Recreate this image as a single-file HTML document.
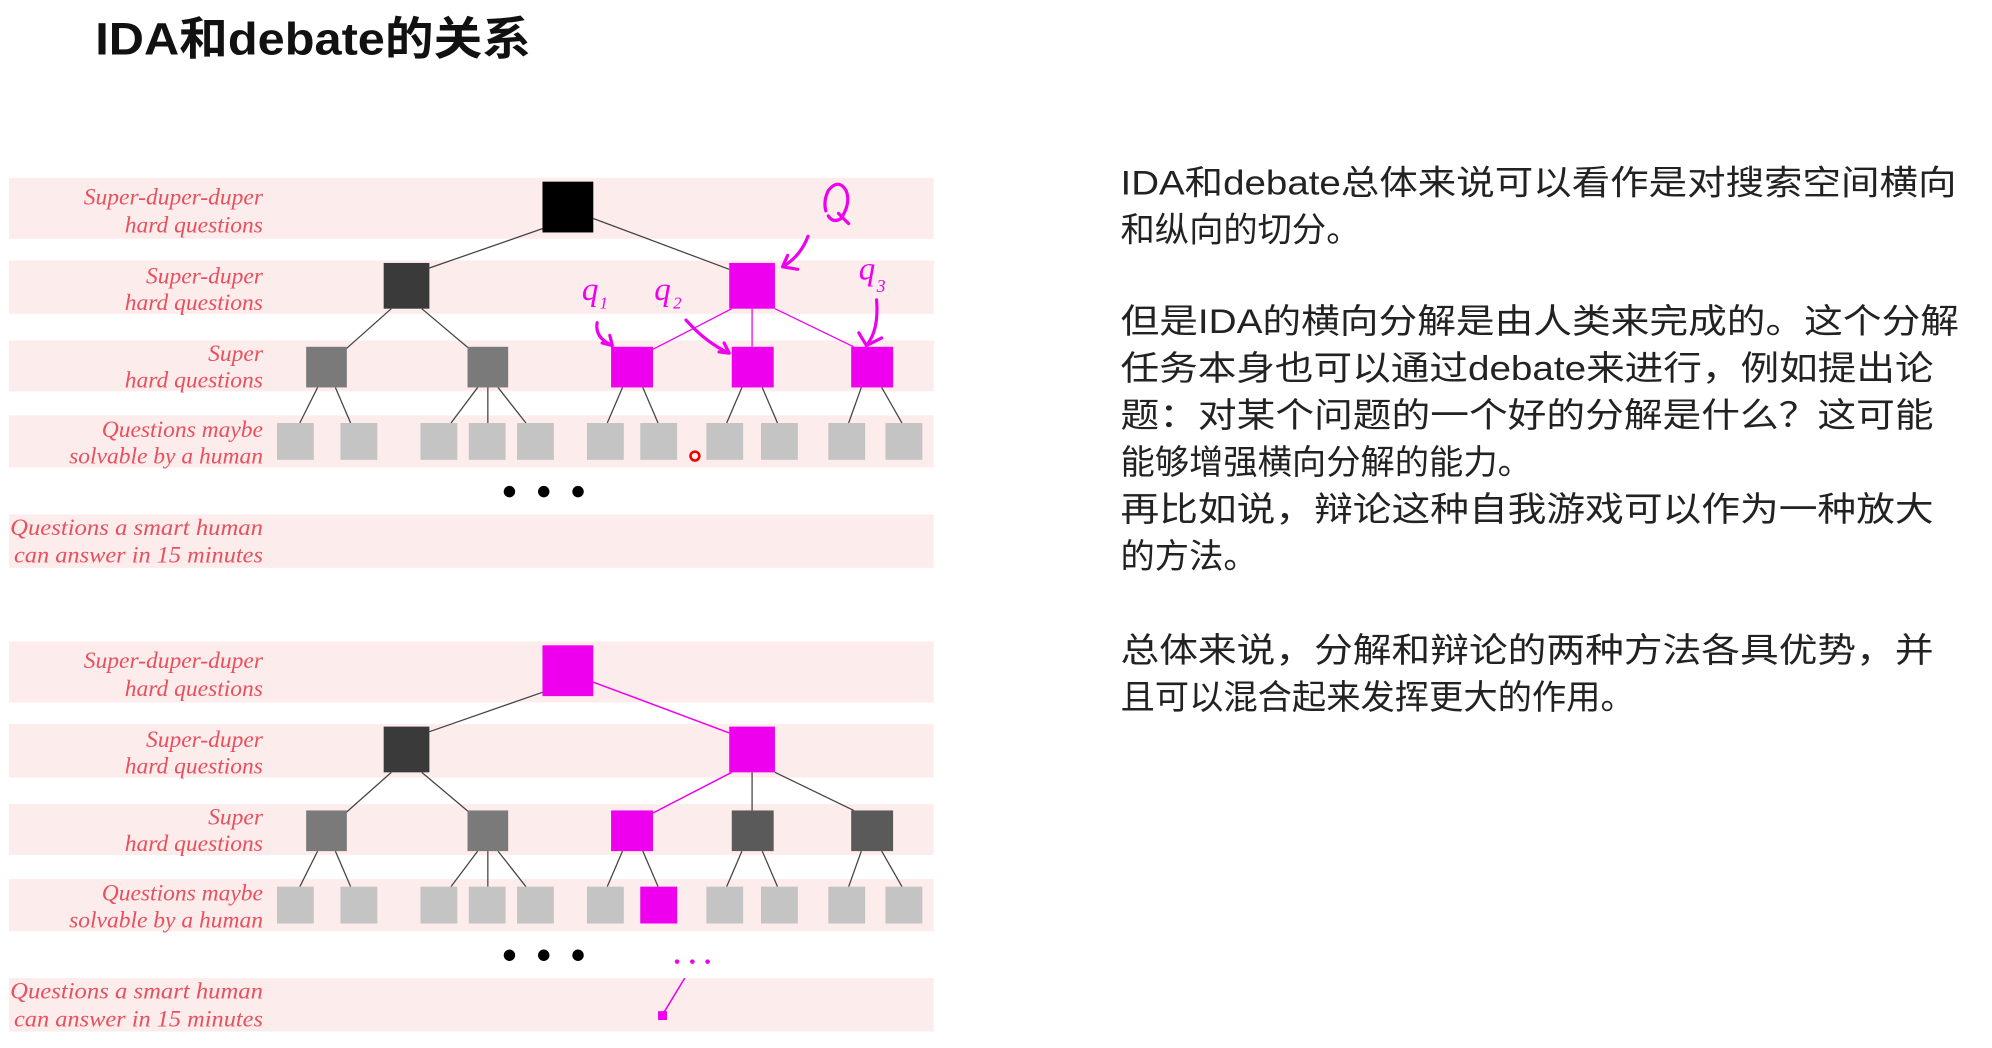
<!DOCTYPE html>
<html><head><meta charset="utf-8"><style>
html,body{margin:0;padding:0;background:#fff;overflow:hidden}
svg{display:block}
.lb{font-family:"Liberation Serif",serif;font-style:italic;font-size:18.5px;fill:#e8505e;text-anchor:end}
.tx{font-family:"Liberation Sans","Noto Sans CJK SC",sans-serif;font-size:27px;fill:#222}
</style></head><body>
<svg width="1992" height="1048" viewBox="0 0 1568 825" preserveAspectRatio="none" xmlns="http://www.w3.org/2000/svg">
<rect width="1568" height="825" fill="#fff"/>
<text x="75" y="43" font-family="Liberation Sans,'Noto Sans CJK SC',sans-serif" font-weight="bold" font-size="36" fill="#111" textLength="343" lengthAdjust="spacingAndGlyphs">IDA和debate的关系</text>

<g id="d1">
<g fill="#fdecec">
<rect x="7" y="140" width="728" height="48"/><rect x="7" y="205" width="728" height="42"/>
<rect x="7" y="268" width="728" height="40"/><rect x="7" y="327" width="728" height="41"/>
<rect x="7" y="405" width="728" height="42"/></g>
<g class="lb">
<text x="207" y="161">Super-duper-duper</text><text x="207" y="183">hard questions</text>
<text x="207" y="223">Super-duper</text><text x="207" y="244">hard questions</text>
<text x="207" y="284">Super</text><text x="207" y="305">hard questions</text>
<text x="207" y="344">Questions maybe</text><text x="207" y="365">solvable by a human</text>
<text x="207" y="421" textLength="199" lengthAdjust="spacingAndGlyphs">Questions a smart human</text><text x="207" y="443" textLength="196" lengthAdjust="spacingAndGlyphs">can answer in 15 minutes</text>
</g>
<g stroke="#444" stroke-width="1">
<line x1="250" y1="305" x2="236" y2="333"/><line x1="264" y1="305" x2="276" y2="333"/>
<line x1="376" y1="305" x2="355" y2="333"/><line x1="384" y1="305" x2="384" y2="333"/><line x1="392" y1="305" x2="414" y2="333"/>
<line x1="490" y1="305" x2="478" y2="333"/><line x1="506" y1="305" x2="518" y2="333"/>
<line x1="584" y1="305" x2="572" y2="333"/><line x1="600" y1="305" x2="612" y2="333"/>
<line x1="678" y1="305" x2="668" y2="333"/><line x1="694" y1="305" x2="710" y2="333"/>
</g>
<g fill="#c4c4c4">
<rect x="218" y="333" width="29" height="29"/><rect x="268" y="333" width="29" height="29"/>
<rect x="331" y="333" width="29" height="29"/><rect x="369" y="333" width="29" height="29"/><rect x="407" y="333" width="29" height="29"/>
<rect x="462" y="333" width="29" height="29"/><rect x="504" y="333" width="29" height="29"/>
<rect x="556" y="333" width="29" height="29"/><rect x="599" y="333" width="29" height="29"/>
<rect x="652" y="333" width="29" height="29"/><rect x="697" y="333" width="29" height="29"/>
</g>
<g fill="#000"><circle cx="401" cy="387" r="4.5"/><circle cx="428" cy="387" r="4.5"/><circle cx="455" cy="387" r="4.5"/></g>
</g>

<g stroke="#444" stroke-width="1">
<line x1="427" y1="180" x2="338" y2="211"/><line x1="467" y1="172" x2="574" y2="212"/>
<line x1="308" y1="243" x2="272" y2="275"/><line x1="332" y1="243" x2="370" y2="275"/>
</g>
<g stroke="#ee00ee" stroke-width="1">
<line x1="576" y1="243" x2="514" y2="275"/><line x1="592" y1="243" x2="592" y2="273"/><line x1="610" y1="243" x2="672" y2="273"/>
</g>
<rect x="427" y="143" width="40" height="40" fill="#000"/>
<rect x="302" y="207" width="36" height="36" fill="#3a3a3a"/>
<rect x="574" y="207" width="36" height="36" fill="#ee00ee"/>
<rect x="241" y="273" width="32" height="32" fill="#7a7a7a"/>
<rect x="368" y="273" width="32" height="32" fill="#7a7a7a"/>
<rect x="481" y="273" width="33" height="32" fill="#ee00ee"/>
<rect x="576" y="273" width="33" height="32" fill="#ee00ee"/>
<rect x="670" y="273" width="33" height="32" fill="#ee00ee"/>
<circle cx="547" cy="359" r="3.5" fill="none" stroke="#e00" stroke-width="2"/>
<g fill="none" stroke="#ee00ee" stroke-width="2.5" stroke-linecap="round">
<path d="M650 166 Q648 158 652 150 Q660 140 666 150 Q670 160 662 172 Q656 176 652 170 M660 168 L668 176"/>
<path d="M636 186 Q630 202 616 210 M616 210 L620 201 M616 210 L628 212"/>
<path d="M470 254 Q468 266 482 272 M482 272 L474 270 M482 272 L480 264"/>
<path d="M540 252 Q556 270 574 278 M574 278 L566 277 M574 278 L570 270"/>
<path d="M690 236 Q692 260 682 272 M682 272 L676 262 M682 272 L694 266"/>
</g>
<g font-family="Liberation Serif,serif" font-style="italic" fill="#ee00ee">
<text x="458" y="236" font-size="26">q</text><text x="472" y="243" font-size="13">1</text>
<text x="515" y="236" font-size="26">q</text><text x="530" y="243" font-size="13">2</text>
<text x="676" y="220" font-size="26">q</text><text x="690" y="230" font-size="14">3</text>
</g>

<g transform="translate(0,365)"><use href="#d1"/></g>
<g stroke="#444" stroke-width="1">
<line x1="427" y1="545" x2="338" y2="576"/>
<line x1="308" y1="608" x2="272" y2="640"/><line x1="332" y1="608" x2="370" y2="640"/>
<line x1="592" y1="608" x2="592" y2="638"/><line x1="610" y1="608" x2="672" y2="638"/>
</g>
<g stroke="#ee00ee" stroke-width="1.2">
<line x1="467" y1="537" x2="574" y2="577"/><line x1="576" y1="608" x2="514" y2="640"/>
<line x1="539" y1="770" x2="522" y2="798"/>
</g>
<rect x="427" y="508" width="40" height="40" fill="#ee00ee"/>
<rect x="302" y="572" width="36" height="36" fill="#3a3a3a"/>
<rect x="574" y="572" width="36" height="36" fill="#ee00ee"/>
<rect x="241" y="638" width="32" height="32" fill="#7a7a7a"/>
<rect x="368" y="638" width="32" height="32" fill="#7a7a7a"/>
<rect x="481" y="638" width="33" height="32" fill="#ee00ee"/>
<rect x="576" y="638" width="33" height="32" fill="#5a5a5a"/>
<rect x="670" y="638" width="33" height="32" fill="#5a5a5a"/>
<rect x="504" y="698" width="29" height="29" fill="#ee00ee"/>
<g fill="#ee00ee"><circle cx="533" cy="757" r="1.8"/><circle cx="545" cy="757" r="1.8"/><circle cx="557" cy="757" r="1.8"/>
<rect x="518" y="796" width="7" height="7"/></g>

<g class="tx">
<text x="882" y="153" textLength="658" lengthAdjust="spacingAndGlyphs">IDA和debate总体来说可以看作是对搜索空间横向</text>
<text x="882" y="190">和纵向的切分。</text>
<text x="882" y="262" textLength="660" lengthAdjust="spacingAndGlyphs">但是IDA的横向分解是由人类来完成的。这个分解</text>
<text x="882" y="299" textLength="640" lengthAdjust="spacingAndGlyphs">任务本身也可以通过debate来进行，例如提出论</text>
<text x="882" y="336" textLength="640" lengthAdjust="spacingAndGlyphs">题：对某个问题的一个好的分解是什么？这可能</text>
<text x="882" y="373">能够增强横向分解的能力。</text>
<text x="882" y="410" textLength="640" lengthAdjust="spacingAndGlyphs">再比如说，辩论这种自我游戏可以作为一种放大</text>
<text x="882" y="447">的方法。</text>
<text x="882" y="521" textLength="640" lengthAdjust="spacingAndGlyphs">总体来说，分解和辩论的两种方法各具优势，并</text>
<text x="882" y="558">且可以混合起来发挥更大的作用。</text>
</g>
</svg>
</body></html>
